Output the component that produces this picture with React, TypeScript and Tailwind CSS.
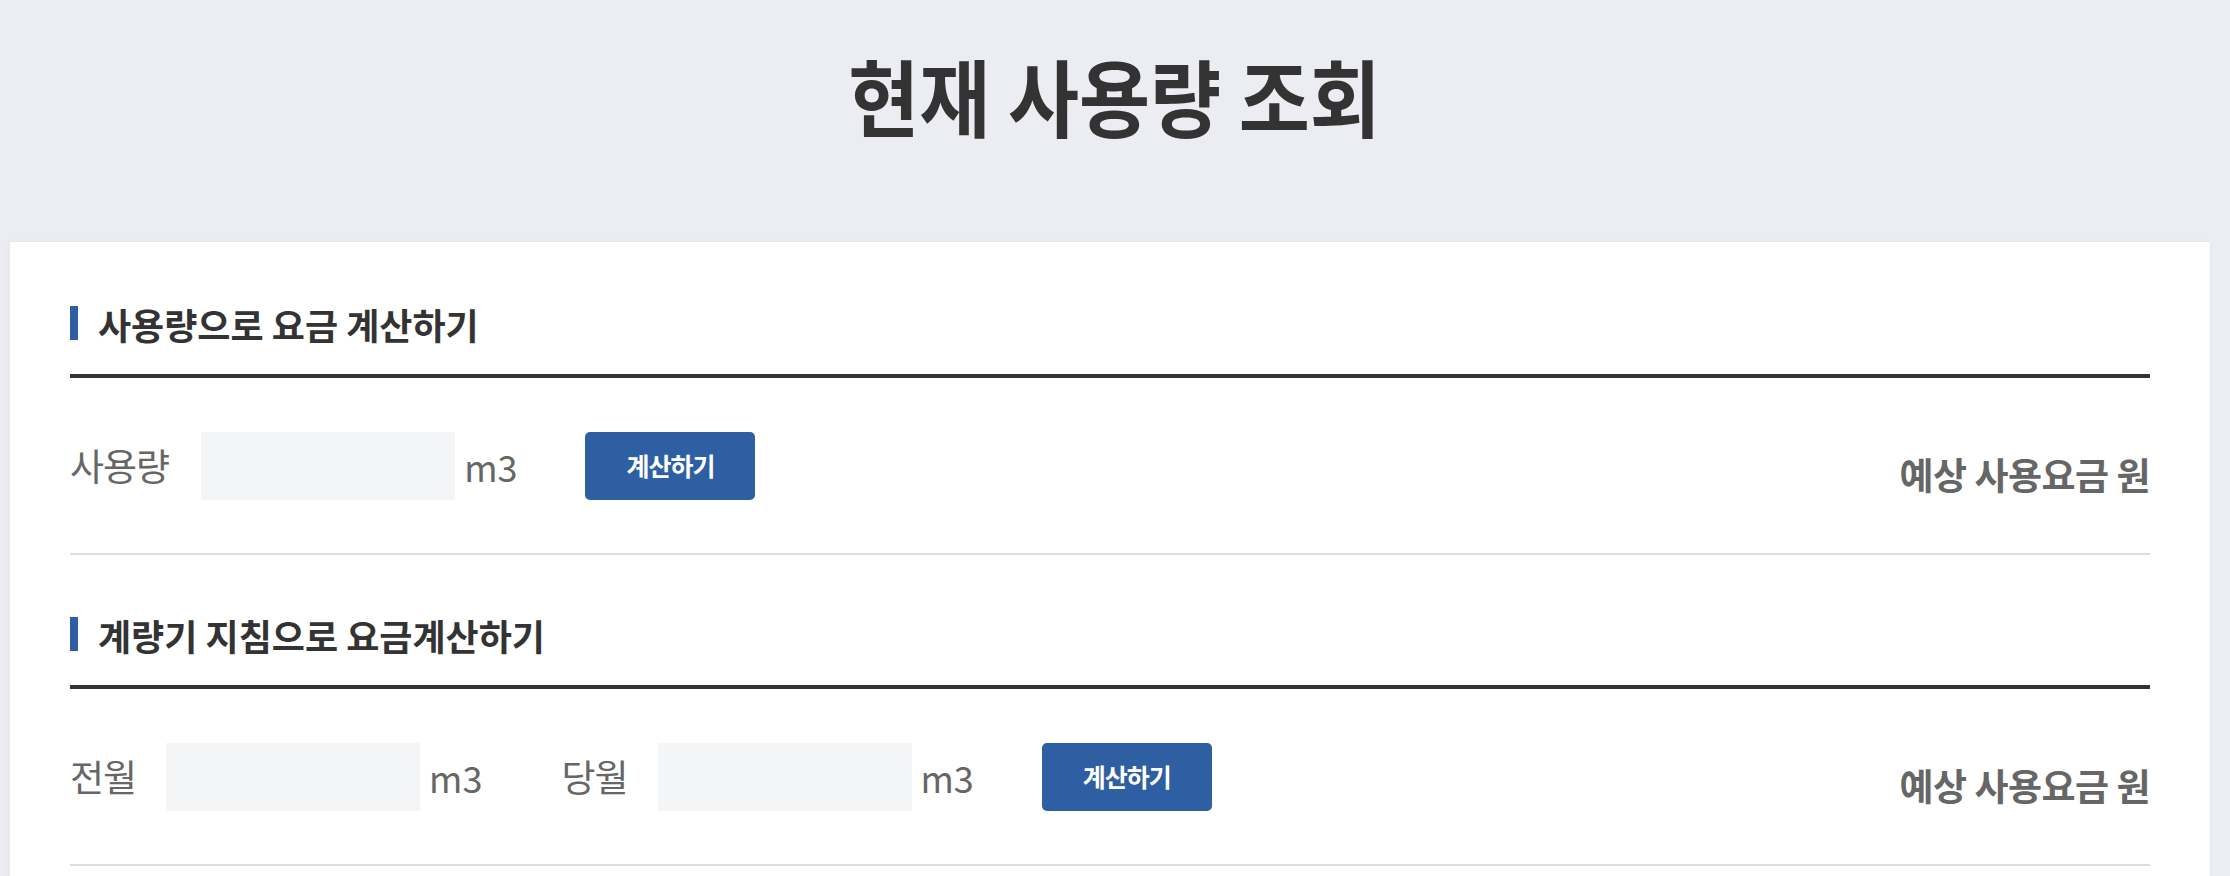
import React from "react";

const FONT = { fontFamily: '"Noto Sans CJK KR", "Noto Sans", sans-serif' };

function Heading({ children }: { children: React.ReactNode }) {
  return (
    <div className="flex items-start">
      <span className="mt-[1px] block h-[34px] w-[8px] bg-[#2e5fa3]" />
      <h2 className="ml-[20px] mt-[1px] text-[36px] font-bold leading-[36px] text-[#333333]">
        {children}
      </h2>
    </div>
  );
}

function Label({ children, className = "" }: { children: React.ReactNode; className?: string }) {
  return (
    <span className={`text-[37px] leading-none tracking-[-1px] text-[#666666] ${className}`}>
      {children}
    </span>
  );
}

function Input({ className = "" }: { className?: string }) {
  return <div className={`h-[68px] w-[254px] bg-[#f4f5f7] ${className}`} />;
}

function Unit() {
  return <span className="ml-[9px] text-[36px] leading-none text-[#666666]">m3</span>;
}

function CalcButton() {
  return (
    <button className="ml-[68px] flex h-[68px] w-[170px] items-center justify-center rounded-[5px] bg-[#2e5fa3] text-[25px] font-bold tracking-[-1px] text-white">
      계산하기
    </button>
  );
}

function Result() {
  return (
    <span className="ml-auto mt-[17px] text-[37px] font-bold leading-none tracking-[-0.5px] text-[#666666]">
      예상 사용요금 원
    </span>
  );
}

export default function App() {
  return (
    <div className="min-h-[876px] w-[2230px] overflow-hidden bg-[#ecedf2]" style={FONT}>
      <header className="flex h-[242px] justify-center pt-[53px]">
        <h1 className="inline-block scale-x-[0.92] text-[84px] font-bold leading-none text-[#333333]">
          현재 사용량 조회
        </h1>
      </header>
      <main className="ml-[10px] w-[2200px] bg-white px-[60px] pb-[60px] pt-[2px] shadow-[0_0_6px_rgba(0,0,0,0.05)]">
        <section className="pt-[61px]">
          <Heading>사용량으로 요금 계산하기</Heading>
          <div className="mt-[32px] h-[4px] bg-[#333333]" />
          <div className="flex h-[175px] items-center">
            <Label>사용량</Label>
            <Input className="ml-[32px]" />
            <Unit />
            <CalcButton />
            <Result />
          </div>
          <div className="h-[2px] bg-[#dddddd]" />
        </section>
        <section className="pt-[61px]">
          <Heading>계량기 지침으로 요금계산하기</Heading>
          <div className="mt-[32px] h-[4px] bg-[#333333]" />
          <div className="flex h-[175px] items-center">
            <Label>전월</Label>
            <Input className="ml-[30px]" />
            <Unit />
            <Label className="ml-[79px]">당월</Label>
            <Input className="ml-[30px]" />
            <Unit />
            <CalcButton />
            <Result />
          </div>
          <div className="h-[2px] bg-[#dddddd]" />
        </section>
      </main>
    </div>
  );
}
